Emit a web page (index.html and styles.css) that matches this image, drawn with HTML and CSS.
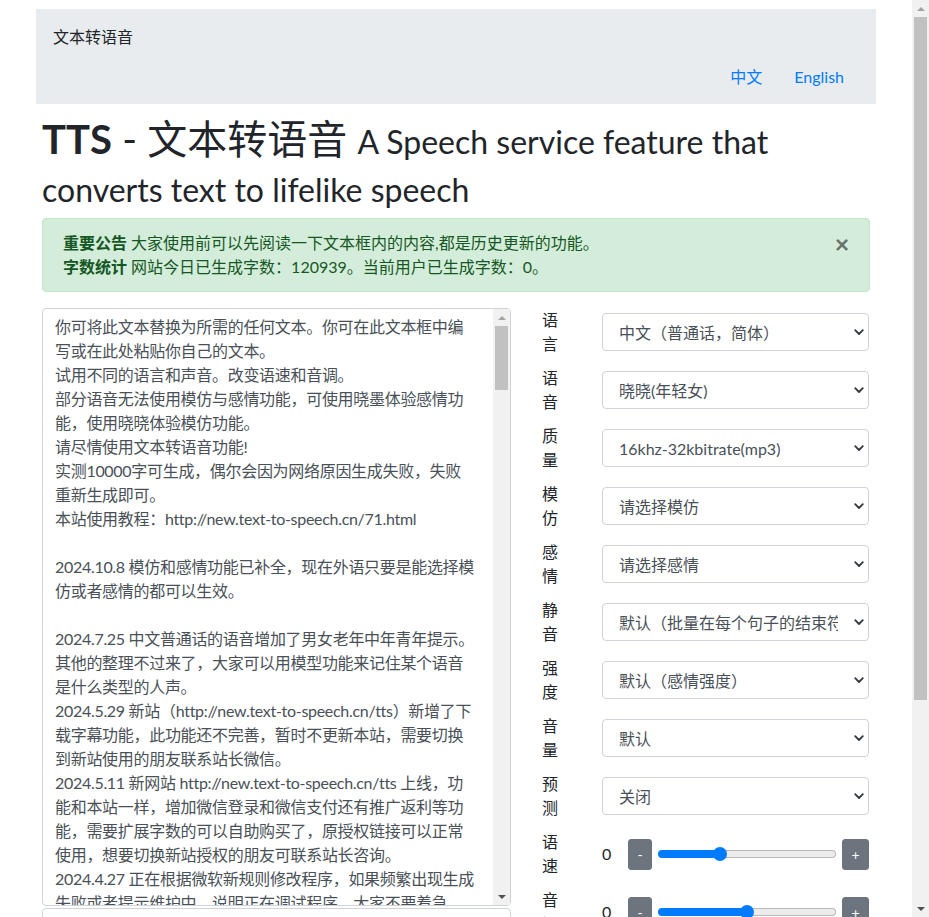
FILE: index.html
```html
<!DOCTYPE html>
<html lang="zh-CN">
<head>
<meta charset="utf-8">
<title>TTS - 文本转语音</title>
<link rel="stylesheet" href="styles.css">
</head>
<body>
<div class="page">
<div class="container">
  <nav class="navbar">
    <div class="brand">文本转语音</div>
    <ul class="nav-links">
      <li><a href="#">中文</a></li>
      <li><a href="#">English</a></li>
    </ul>
  </nav>
  <main class="main">
    <h1 class="title"><strong>TTS</strong> - 文本转语音 <small>A Speech service feature that converts text to lifelike speech</small></h1>
    <div class="alert">
      <div><strong>重要公告</strong> 大家使用前可以先阅读一下文本框内的内容,都是历史更新的功能。</div>
      <div><strong>字数统计</strong> 网站今日已生成字数：120939。当前用户已生成字数：0。</div>
      <button class="close" type="button">×</button>
    </div>
    <div class="workspace">
      <div class="text-col">
<textarea class="text-input">
你可将此文本替换为所需的任何文本。你可在此文本框中编写或在此处粘贴你自己的文本。
试用不同的语言和声音。改变语速和音调。
部分语音无法使用模仿与感情功能，可使用晓墨体验感情功能，使用晓晓体验模仿功能。
请尽情使用文本转语音功能!
实测10000字可生成，偶尔会因为网络原因生成失败，失败重新生成即可。
本站使用教程：http://new.text-to-speech.cn/71.html

2024.10.8 模仿和感情功能已补全，现在外语只要是能选择模仿或者感情的都可以生效。

2024.7.25 中文普通话的语音增加了男女老年中年青年提示。其他的整理不过来了，大家可以用模型功能来记住某个语音是什么类型的人声。
2024.5.29 新站（http://new.text-to-speech.cn/tts）新增了下载字幕功能，此功能还不完善，暂时不更新本站，需要切换到新站使用的朋友联系站长微信。
2024.5.11 新网站 http://new.text-to-speech.cn/tts 上线，功能和本站一样，增加微信登录和微信支付还有推广返利等功能，需要扩展字数的可以自助购买了，原授权链接可以正常使用，想要切换新站授权的朋友可联系站长咨询。
2024.4.27 正在根据微软新规则修改程序，如果频繁出现生成失败或者提示维护中，说明正在调试程序，大家不要着急，稍后再试即可。
</textarea>
        <div class="scrollbar text-scrollbar" aria-hidden="true">
          <div class="scroll-btn"><svg width="8" height="4" viewBox="0 0 8 4"><path d="M0 4 L4 0 L8 4 Z" fill="#a3a3a3"/></svg></div>
          <div class="scroll-track"><div class="scroll-thumb text-thumb"></div></div>
          <div class="scroll-btn"><svg width="8" height="4" viewBox="0 0 8 4"><path d="M0 0 L4 4 L8 0 Z" fill="#505050"/></svg></div>
        </div>
        <input class="sub-input" type="text">
      </div>
      <div class="settings">
        <div class="field">
          <label class="field-label">语言</label>
          <div class="field-control select-wrap">
            <select class="select"><option>中文（普通话，简体）</option></select>
            <svg class="chevron" width="10" height="7" viewBox="0 0 10 7"><path d="M1.2 1.2 L5 5 L8.8 1.2" fill="none" stroke="#343a40" stroke-width="1.8" stroke-linecap="round" stroke-linejoin="round"/></svg>
          </div>
        </div>
        <div class="field">
          <label class="field-label">语音</label>
          <div class="field-control select-wrap">
            <select class="select"><option>晓晓(年轻女)</option></select>
            <svg class="chevron" width="10" height="7" viewBox="0 0 10 7"><path d="M1.2 1.2 L5 5 L8.8 1.2" fill="none" stroke="#343a40" stroke-width="1.8" stroke-linecap="round" stroke-linejoin="round"/></svg>
          </div>
        </div>
        <div class="field">
          <label class="field-label">质量</label>
          <div class="field-control select-wrap">
            <select class="select"><option>16khz-32kbitrate(mp3)</option></select>
            <svg class="chevron" width="10" height="7" viewBox="0 0 10 7"><path d="M1.2 1.2 L5 5 L8.8 1.2" fill="none" stroke="#343a40" stroke-width="1.8" stroke-linecap="round" stroke-linejoin="round"/></svg>
          </div>
        </div>
        <div class="field">
          <label class="field-label">模仿</label>
          <div class="field-control select-wrap">
            <select class="select"><option>请选择模仿</option></select>
            <svg class="chevron" width="10" height="7" viewBox="0 0 10 7"><path d="M1.2 1.2 L5 5 L8.8 1.2" fill="none" stroke="#343a40" stroke-width="1.8" stroke-linecap="round" stroke-linejoin="round"/></svg>
          </div>
        </div>
        <div class="field">
          <label class="field-label">感情</label>
          <div class="field-control select-wrap">
            <select class="select"><option>请选择感情</option></select>
            <svg class="chevron" width="10" height="7" viewBox="0 0 10 7"><path d="M1.2 1.2 L5 5 L8.8 1.2" fill="none" stroke="#343a40" stroke-width="1.8" stroke-linecap="round" stroke-linejoin="round"/></svg>
          </div>
        </div>
        <div class="field">
          <label class="field-label">静音</label>
          <div class="field-control select-wrap">
            <select class="select"><option>默认（批量在每个句子的结束符后添加静音）</option></select>
            <svg class="chevron" width="10" height="7" viewBox="0 0 10 7"><path d="M1.2 1.2 L5 5 L8.8 1.2" fill="none" stroke="#343a40" stroke-width="1.8" stroke-linecap="round" stroke-linejoin="round"/></svg>
          </div>
        </div>
        <div class="field">
          <label class="field-label">强度</label>
          <div class="field-control select-wrap">
            <select class="select"><option>默认（感情强度）</option></select>
            <svg class="chevron" width="10" height="7" viewBox="0 0 10 7"><path d="M1.2 1.2 L5 5 L8.8 1.2" fill="none" stroke="#343a40" stroke-width="1.8" stroke-linecap="round" stroke-linejoin="round"/></svg>
          </div>
        </div>
        <div class="field">
          <label class="field-label">音量</label>
          <div class="field-control select-wrap">
            <select class="select"><option>默认</option></select>
            <svg class="chevron" width="10" height="7" viewBox="0 0 10 7"><path d="M1.2 1.2 L5 5 L8.8 1.2" fill="none" stroke="#343a40" stroke-width="1.8" stroke-linecap="round" stroke-linejoin="round"/></svg>
          </div>
        </div>
        <div class="field">
          <label class="field-label">预测</label>
          <div class="field-control select-wrap">
            <select class="select"><option>关闭</option></select>
            <svg class="chevron" width="10" height="7" viewBox="0 0 10 7"><path d="M1.2 1.2 L5 5 L8.8 1.2" fill="none" stroke="#343a40" stroke-width="1.8" stroke-linecap="round" stroke-linejoin="round"/></svg>
          </div>
        </div>
        <div class="field">
          <label class="field-label">语速</label>
          <div class="field-control slider-row">
            <span class="slider-value">0</span>
            <button class="btn-step btn-minus" type="button">-</button>
            <input class="range" type="range" min="-100" max="200" value="0" style="--p:34.8%">
            <button class="btn-step btn-plus" type="button">+</button>
          </div>
        </div>
        <div class="field">
          <label class="field-label">音调</label>
          <div class="field-control slider-row">
            <span class="slider-value">0</span>
            <button class="btn-step btn-minus" type="button">-</button>
            <input class="range" type="range" min="-50" max="50" value="0" style="--p:50.6%">
            <button class="btn-step btn-plus" type="button">+</button>
          </div>
        </div>
      </div>
    </div>
  </main>
</div>
</div>
<div class="scrollbar page-scrollbar" aria-hidden="true">
  <div class="scroll-btn"><svg width="8" height="4" viewBox="0 0 8 4"><path d="M0 4 L4 0 L8 4 Z" fill="#a3a3a3"/></svg></div>
  <div class="scroll-track"><div class="scroll-thumb page-thumb"></div></div>
  <div class="scroll-btn"><svg width="8" height="4" viewBox="0 0 8 4"><path d="M0 0 L4 4 L8 0 Z" fill="#505050"/></svg></div>
</div>
</body>
</html>
```
FILE: styles.css
```css
html, body {
  margin: 0;
  padding: 0;
}
body {
  font-family: Lato, "Noto Sans CJK SC", sans-serif;
  font-size: 16px;
  line-height: 1.5;
  color: #212529;
  background: #fff;
}
.page {
  width: calc(100vw - 17px);
}
.container {
  max-width: 840px;
  margin: 0 auto;
  padding: 9px 0 240px;
}
/* scrollbars drawn over content */
.scrollbar {
  display: flex;
  flex-direction: column;
  width: 17px;
  background: #f1f1f1;
}
.page-scrollbar {
  position: fixed;
  top: 0;
  right: 0;
  height: 100vh;
}
.text-scrollbar {
  position: absolute;
  top: 1px;
  right: 1px;
  height: 596px;
}
.scroll-btn {
  flex: none;
  height: 17px;
  display: flex;
  align-items: center;
  justify-content: center;
}
.scroll-track {
  flex: 1;
  padding: 0 2px;
}
.scroll-thumb {
  background: #c1c1c1;
}
.page-thumb {
  height: 683px;
}
.text-thumb {
  height: 64px;
}
.navbar {
  background: #e9ecef;
  padding: 16px 16px 7px 17px;
}
.brand {
  line-height: 24px;
  color: #212529;
}
.nav-links {
  display: flex;
  justify-content: flex-end;
  list-style: none;
  margin: 8px 0 0;
  padding: 0;
}
.nav-links a {
  display: block;
  padding: 8px 16px;
  line-height: 24px;
  color: #007bff;
  text-decoration: none;
}
.main {
  padding: 0 6px;
}
.title {
  font-size: 40px;
  font-weight: 400;
  line-height: 48px;
  margin: 11px 0 7px;
  color: #212529;
}
.title strong {
  font-weight: 700;
  line-height: 1;
}
.title small {
  font-size: 32px;
  font-weight: 400;
  line-height: 1;
}
.alert {
  position: relative;
  padding: 12px 64px 12px 20px;
  margin-bottom: 16px;
  border: 1px solid #c3e6cb;
  border-radius: 4px;
  background: #d4edda;
  color: #155724;
  line-height: 24px;
}
.alert strong {
  font-weight: 700;
}
.close {
  position: absolute;
  top: 0;
  right: 0;
  padding: 14px 20px;
  background: transparent;
  border: 0;
  font-family: "Liberation Sans", sans-serif;
  font-size: 24px;
  font-weight: 700;
  line-height: 1;
  color: #000;
  opacity: .5;
  text-shadow: 0 1px 0 #fff;
  cursor: pointer;
}
.workspace {
  display: flex;
  align-items: flex-start;
}
.text-col {
  position: relative;
  width: 469px;
  flex: none;
}
.text-input {
  display: block;
  box-sizing: border-box;
  width: 100%;
  height: 598px;
  padding: 6px 34.7px 6px 12px;
  margin: 0;
  border: 1px solid #ced4da;
  border-radius: 4px;
  font-family: Lato, "Noto Sans CJK SC", sans-serif;
  font-size: 16px;
  line-height: 24px;
  letter-spacing: -0.3px;
  color: #495057;
  resize: none;
  overflow: hidden;
}
.sub-input {
  display: block;
  box-sizing: border-box;
  width: 100%;
  height: 38px;
  margin-top: 2px;
  padding: 6px 12px;
  border: 1px solid #ced4da;
  border-radius: 4px;
  font: inherit;
}
.settings {
  margin-left: 32px;
  flex: 1;
}
.field {
  display: flex;
  align-items: center;
  min-height: 48px;
  margin-bottom: 10px;
}
.field-label {
  width: 16px;
  flex: none;
  line-height: 24px;
  color: #212529;
  margin-left: -1px;
}
.field-control {
  margin-left: 44px;
  width: 267px;
  flex: none;
}
.select-wrap {
  position: relative;
}
.select {
  display: block;
  box-sizing: border-box;
  width: 100%;
  height: 38px;
  padding: 0 30px 0 16px;
  border: 1px solid #ced4da;
  border-radius: 4px;
  background: #fff;
  color: #495057;
  font-family: Lato, "Noto Sans CJK SC", sans-serif;
  font-size: 16px;
  -webkit-appearance: none;
  appearance: none;
}
.chevron {
  position: absolute;
  right: 5px;
  top: 16px;
  pointer-events: none;
}
.slider-row {
  display: flex;
  align-items: center;
}
.slider-value {
  width: 26px;
  flex: none;
  line-height: 24px;
}
.btn-step {
  flex: none;
  box-sizing: border-box;
  height: 31px;
  padding: 0;
  border: 1px solid #6c757d;
  border-radius: 3px;
  background: #6c757d;
  color: #fff;
  font-family: Lato, "Noto Sans CJK SC", sans-serif;
  font-size: 14px;
  line-height: 21px;
}
.btn-minus {
  width: 24px;
}
.btn-plus {
  width: 27px;
}
.range {
  -webkit-appearance: none;
  appearance: none;
  flex: none;
  box-sizing: border-box;
  width: 178px;
  height: 8px;
  margin: 0 6px;
  border: 1px solid transparent;
  border-radius: 4px;
  background:
    linear-gradient(#007bff, #007bff) 0 0 / var(--p) 100% no-repeat border-box,
    linear-gradient(#ececec, #ececec) padding-box,
    linear-gradient(#b8b8b8, #b8b8b8) border-box;
  outline: none;
}
.range::-webkit-slider-thumb {
  -webkit-appearance: none;
  appearance: none;
  width: 14px;
  height: 14px;
  border-radius: 50%;
  background: #007bff;
  border: 0;
}
```
